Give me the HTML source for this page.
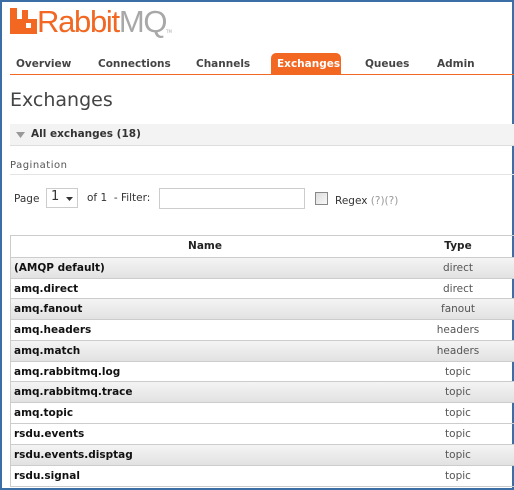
<!DOCTYPE html>
<html><head><style>
body{margin:0;width:514px;height:490px;overflow:hidden;background:#fff;font-family:"DejaVu Sans",Verdana,sans-serif;position:relative}
.frame{position:absolute;left:0;top:0;width:510px;height:486px;border:2px solid #3a6ea5}
.abs{position:absolute}
.nav span{position:absolute;top:58px;font-size:10.5px;font-weight:bold;color:#444;}
.tab{position:absolute;left:271px;top:53px;width:70px;height:22px;background:#f26722;border-radius:5px 5px 0 0}
.row{position:absolute;left:10px;width:504px;height:20px;border-top:1px solid #ccc;font-size:10.5px;line-height:20px}
.row .n{position:absolute;left:4px;font-weight:bold;color:#111}
.row .t{position:absolute;left:398px;width:100px;text-align:center;color:#555}
.g{background:linear-gradient(#f4f4f4,#e2e2e2)}
</style></head><body>
<div class="frame"></div>
<svg class="abs" style="left:10px;top:8px" width="27" height="26"><path d="M0 0h7v11h5V2h6v9h9v15H0z" fill="#f26722"/><rect x="16" y="15" width="5" height="5" fill="#fff"/></svg>
<div class="abs" style="left:37px;top:4px;font-family:'Liberation Sans',sans-serif;font-size:31px;color:#f26722;letter-spacing:-1.3px">Rabbit<span style="color:#a8a8a8">MQ</span></div>
<div class="abs" style="left:166px;top:29px;font-size:4px;color:#aaa">TM</div>
<div class="tab"></div>
<div class="nav">
<span style="left:16px">Overview</span>
<span style="left:98px">Connections</span>
<span style="left:196px">Channels</span>
<span style="left:277px;color:#fff">Exchanges</span>
<span style="left:365px">Queues</span>
<span style="left:437px">Admin</span>
</div>
<div class="abs" style="left:10px;top:74px;width:504px;height:1px;background:#f26722"></div>
<div class="abs" style="left:10px;top:89px;font-size:19px;color:#444">Exchanges</div>
<div class="abs" style="left:10px;top:124px;width:504px;height:21px;background:#f3f3f3;border-bottom:1px solid #ddd"></div>
<svg class="abs" style="left:16px;top:132px" width="9" height="6"><path d="M0 0h9L4.5 6z" fill="#999"/></svg>
<div class="abs" style="left:31px;top:128px;font-size:10.5px;font-weight:bold;color:#333">All exchanges (18)</div>
<div class="abs" style="left:10px;top:160px;font-size:10px;color:#555;letter-spacing:.5px">Pagination</div>
<div class="abs" style="left:10px;top:174px;width:504px;height:1px;background:#e4e4e4"></div>
<div class="abs" style="left:14px;top:193px;font-size:10.5px;color:#333">Page</div>
<div class="abs" style="left:46px;top:188px;width:32px;height:20px;border:1px solid #ccc;box-sizing:border-box;font-size:13px;color:#333;padding-left:4px">1</div>
<svg class="abs" style="left:66px;top:197px" width="7" height="4"><path d="M0 0h7L3.5 4z" fill="#333"/></svg>
<div class="abs" style="left:87px;top:192px;font-size:10.5px;color:#333">of 1 &nbsp;- Filter:</div>
<div class="abs" style="left:159px;top:188px;width:146px;height:21px;border:1px solid #ccc;box-sizing:border-box"></div>
<div class="abs" style="left:315px;top:192px;width:13px;height:13px;border:1px solid #888;box-sizing:border-box;background:linear-gradient(135deg,#ddd,#f8f8f8)"></div>
<div class="abs" style="left:335px;top:195px;font-size:10.5px;color:#333">Regex <span style="color:#999">(?)(?)</span></div>

<div class="row" style="top:235px;height:21px;line-height:21px;font-weight:bold;color:#222"><span class="abs" style="left:0;width:390px;text-align:center">Name</span><span class="abs" style="left:398px;width:100px;text-align:center">Type</span></div>
<div class="row g" style="top:257px"><span class="n">(AMQP default)</span><span class="t">direct</span></div>
<div class="row" style="top:278px"><span class="n">amq.direct</span><span class="t">direct</span></div>
<div class="row g" style="top:298px"><span class="n">amq.fanout</span><span class="t">fanout</span></div>
<div class="row" style="top:319px"><span class="n">amq.headers</span><span class="t">headers</span></div>
<div class="row g" style="top:340px"><span class="n">amq.match</span><span class="t">headers</span></div>
<div class="row" style="top:361px"><span class="n">amq.rabbitmq.log</span><span class="t">topic</span></div>
<div class="row g" style="top:381px"><span class="n">amq.rabbitmq.trace</span><span class="t">topic</span></div>
<div class="row" style="top:402px"><span class="n">amq.topic</span><span class="t">topic</span></div>
<div class="row" style="top:423px"><span class="n">rsdu.events</span><span class="t">topic</span></div>
<div class="row g" style="top:444px"><span class="n">rsdu.events.disptag</span><span class="t">topic</span></div>
<div class="row" style="top:465px"><span class="n">rsdu.signal</span><span class="t">topic</span></div>
<div class="row" style="top:486px;height:1px"></div>
<div class="abs" style="left:10px;top:235px;width:1px;height:252px;background:#ccc"></div>
</body></html>
